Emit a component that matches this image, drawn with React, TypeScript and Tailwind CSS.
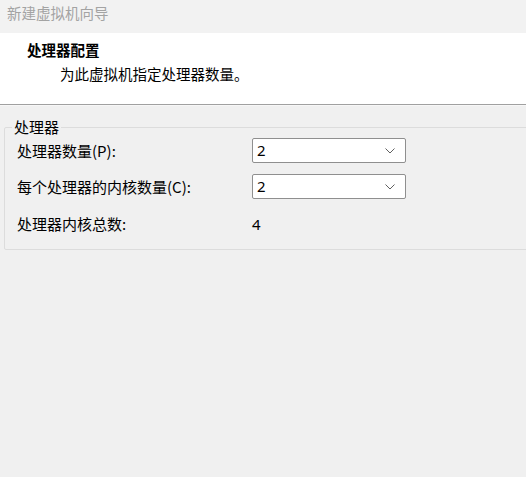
import React from "react";

function Combo({ value }: { value: string }) {
  return (
    <div className="w-[154px] h-[25px] bg-white border border-[#8f8f8f] rounded-[2px] flex items-center pl-[4px] pr-[10px]">
      <span className="flex-1 text-[15px] leading-none text-black font-['Segoe_UI','Noto_Sans','Liberation_Sans',sans-serif]">{value}</span>
      <svg width="10" height="6" viewBox="0 0 10 6" className="mt-[1px]">
        <path d="M0.5 0.5 L5 5 L9.5 0.5" fill="none" stroke="#606060" strokeWidth="1" />
      </svg>
    </div>
  );
}

export default function App() {
  return (
    <div className="w-[526px] h-[477px] bg-[#f0f0f0] overflow-hidden text-black font-['Noto_Sans_CJK_SC','Noto_Sans',sans-serif]">
      <div className="h-[33px] bg-[#f2f2f2] flex items-center pl-[7px] pb-[7px] text-[14.5px] text-[#a3a3a3] leading-none">
        新建虚拟机向导
      </div>
      <div className="h-[72px] bg-white pt-[7px] border-b border-[#a0a0a0]">
        <div className="pl-[27px] text-[14.5px] font-bold leading-[20px]">处理器配置</div>
        <div className="pl-[60px] mt-[4px] text-[14.5px] leading-[20px]">为此虚拟机指定处理器数量。</div>
      </div>
      <div className="h-px bg-[#f7f7f7]" />
      <fieldset className="ml-[4px] mt-[11px] w-[560px] border border-[#dcdcdc] rounded-[2px] pb-[15px]">
        <legend className="ml-[7px] px-[2px] text-[15px] leading-[20px]">处理器</legend>
        <div className="flex flex-col pl-[12px]">
          <div className="flex items-center mt-[1px] h-[25px]">
            <span className="w-[235px] text-[15px] leading-[20px]">处理器数量(P):</span>
            <Combo value="2" />
          </div>
          <div className="flex items-center mt-[11px] h-[25px]">
            <span className="w-[235px] text-[15px] leading-[20px]">每个处理器的内核数量(C):</span>
            <Combo value="2" />
          </div>
          <div className="flex items-center mt-[15px] h-[20px]">
            <span className="w-[235px] text-[15px] leading-[20px]">处理器内核总数:</span>
            <span className="text-[15px] leading-[20px] font-['Segoe_UI','Noto_Sans','Liberation_Sans',sans-serif]">4</span>
          </div>
        </div>
      </fieldset>
    </div>
  );
}
